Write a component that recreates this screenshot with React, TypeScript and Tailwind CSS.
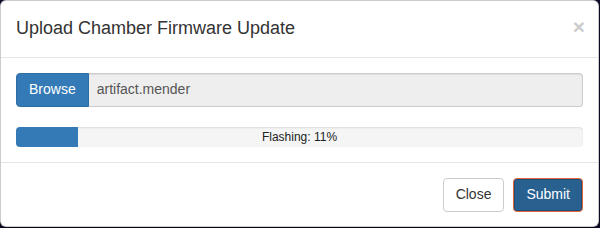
export default function App() {
  const progress = 11;

  return (
    <div className="w-[600px] h-[228px] bg-[#120a2a] overflow-hidden font-['Liberation_Sans',Arial,sans-serif] text-[14px] text-[#333]">
      <div className="w-[599px] h-[227px] bg-white border border-black/20 rounded-md shadow-[0_3px_9px_rgba(0,0,0,0.5)] flex flex-col">
        {/* header */}
        <div className="flex items-start justify-between p-[15px] border-b border-[#e5e5e5]">
          <h4 className="text-[18px] leading-[1.42857] font-normal text-[#333]">Upload Chamber Firmware Update</h4>
          <button className="text-[21px] font-bold leading-none text-black opacity-20 -mr-[2px]">×</button>
        </div>

        {/* body */}
        <div className="p-[15px] flex flex-col gap-5">
          <div className="flex h-[34px]">
            <span className="px-3 flex items-center bg-[#337ab7] border border-[#2e6da4] text-white rounded-l">Browse</span>
            <input
              readOnly
              value="artifact.mender"
              className="flex-1 pl-2 pr-3 bg-[#eee] border border-l-0 border-[#ccc] rounded-r text-[#555] shadow-[inset_0_1px_1px_rgba(0,0,0,0.075)] outline-none"
            />
          </div>

          <div className="relative h-5 bg-[#f5f5f5] rounded shadow-[inset_0_1px_2px_rgba(0,0,0,0.1)] overflow-hidden">
            <div className="h-full bg-[#337ab7]" style={{ width: `${progress}%` }} />
            <span className="absolute inset-0 flex items-center justify-center text-[12px] text-[#222]">
              Flashing: {progress}%
            </span>
          </div>
        </div>

        {/* footer */}
        <div className="flex justify-end gap-[9px] p-[15px] border-t border-[#e5e5e5]">
          <button className="h-[34px] px-3 bg-white border border-[#ccc] rounded text-[#333]">Close</button>
          <button className="h-[34px] px-3 bg-[#286090] border border-[#e0643c] rounded text-white shadow-[inset_0_0_0_1px_#204d74]">Submit</button>
        </div>
      </div>
    </div>
  );
}
